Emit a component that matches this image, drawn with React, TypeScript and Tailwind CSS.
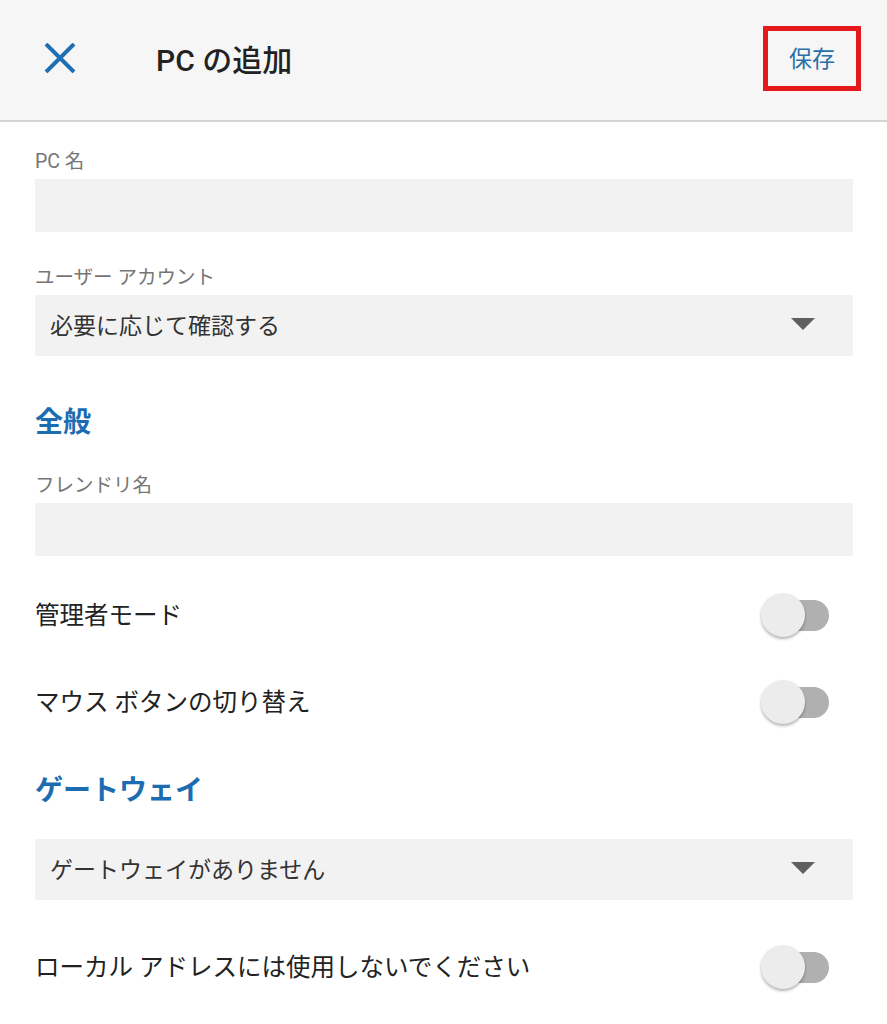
const font = { fontFamily: '"Roboto", "Noto Sans CJK JP", sans-serif' };

function Toggle() {
  return (
    <div className="relative h-[44px] w-[70px] shrink-0">
      <div className="absolute left-[14px] top-[7px] h-[31px] w-[54px] rounded-full bg-[#b0b0b0]" />
      <div className="absolute left-0 top-0 h-[44px] w-[44px] rounded-full bg-[#ececec] shadow-[0_2px_3px_rgba(0,0,0,0.3)]" />
    </div>
  );
}

function Caret() {
  return (
    <svg width="24" height="12" viewBox="0 0 24 12" className="mt-[-3px] shrink-0">
      <path d="M0 0 L24 0 L12 12 Z" fill="#5f5f5f" />
    </svg>
  );
}

function Label({ children }: { children: React.ReactNode }) {
  return <div className="pt-[2px] text-[19.5px] leading-[24px] text-[#757575]">{children}</div>;
}

function Select({ value }: { value: string }) {
  return (
    <div className="flex h-[61px] items-center justify-between bg-[#f2f2f2] pl-[15px] pr-[38px]">
      <span className="pt-[4px] text-[23px] text-[#333]">{value}</span>
      <Caret />
    </div>
  );
}

function ToggleRow({ label }: { label: string }) {
  return (
    <div className="flex items-center justify-between pr-[22px]">
      <span className="pt-[2px] text-[24.5px] text-[#222]">{label}</span>
      <Toggle />
    </div>
  );
}

export default function App() {
  return (
    <div className="min-h-[1024px] w-[887px] bg-white" style={font}>
      <header className="flex h-[122px] items-center border-b-2 border-[#d4d4d4] bg-[#f6f6f6] pl-[43px] pr-[26px]">
        <svg width="34" height="30" viewBox="0 0 34 30" className="mt-[-4px]">
          <path d="M3 1 L31 29 M31 1 L3 29" stroke="#1f6fb5" strokeWidth="4" strokeLinecap="butt" />
        </svg>
        <h1 className="ml-[79px] text-[30px] font-medium text-[#222]">PC の追加</h1>
        <div className="ml-auto mt-[-4px] flex h-[65px] w-[98px] items-center justify-center border-[5px] border-[#e5191b]">
          <span className="pt-[5px] text-[23px] text-[#2a6fa8]">保存</span>
        </div>
      </header>

      <main className="px-[35px] pr-[34px]">
        <div className="pt-[26px]">
          <Label>PC 名</Label>
          <div className="mt-[5px] h-[53px] bg-[#f2f2f2]" />
        </div>

        <div className="pt-[32px]">
          <Label>ユーザー アカウント</Label>
          <div className="mt-[5px]">
            <Select value="必要に応じて確認する" />
          </div>
        </div>

        <h2 className="pt-[48px] text-[28px] font-bold leading-[38px] text-[#1b6cb0]">全般</h2>

        <div className="pt-[30px]">
          <Label>フレンドリ名</Label>
          <div className="mt-[5px] h-[53px] bg-[#f2f2f2]" />
        </div>

        <div className="mt-[37px]">
          <ToggleRow label="管理者モード" />
        </div>
        <div className="mt-[43px]">
          <ToggleRow label="マウス ボタンの切り替え" />
        </div>

        <h2 className="pt-[48px] text-[28px] font-bold leading-[38px] text-[#1b6cb0]">ゲートウェイ</h2>

        <div className="mt-[29px]">
          <Select value="ゲートウェイがありません" />
        </div>

        <div className="mt-[45px]">
          <ToggleRow label="ローカル アドレスには使用しないでください" />
        </div>
      </main>
    </div>
  );
}
